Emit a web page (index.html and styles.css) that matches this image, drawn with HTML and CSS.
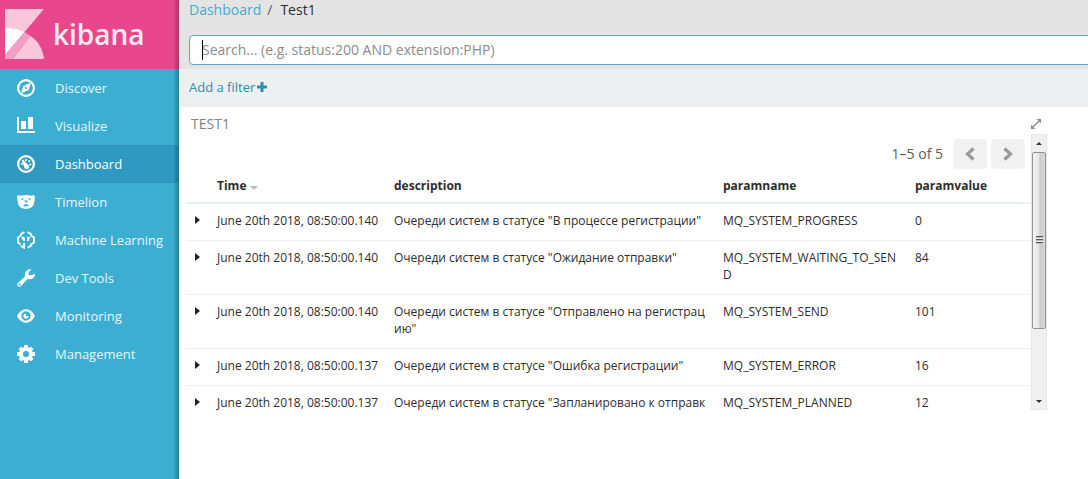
FILE: index.html
```html
<!DOCTYPE html>
<html lang="en">
<head>
<meta charset="utf-8">
<title>Test1 - Kibana</title>
<link rel="stylesheet" href="styles.css">
</head>
<body>
<div class="app">
  <aside class="sidebar">
    <a class="brand" href="#">
      <svg class="brand-mark" width="39" height="50" viewBox="0 0 39 50" aria-hidden="true">
        <path d="M0 0H39L0 46Z" fill="#f9c6dc"/>
        <path d="M0 19Q10 18.500 19.500 23L0 46Z" fill="#fff"/>
        <path d="M19.500 23L25.500 27L8 50H0V46Z" fill="#f49ec5"/>
        <path d="M25.500 27C33 32 38 40 39 50H8Z" fill="#f9c6dc"/>
      </svg>
      <span class="brand-name">kibana</span>
    </a>
    <nav class="nav">
      <a class="nav-item" href="#">
        <svg class="nav-icon" viewBox="0 0 18 18" aria-hidden="true"><circle cx="9" cy="9" r="7.900" fill="none" stroke="#fff" stroke-width="2.200"/><path fill="#fff" fill-rule="evenodd" d="M13.700 3.800L11.800 11 4.300 14.200 6.200 7ZM9 7.900A1.100 1.100 0 1 0 9 10.100 1.100 1.100 0 1 0 9 7.900Z"/></svg>
        Discover
      </a>
      <a class="nav-item" href="#">
        <svg class="nav-icon" viewBox="0 0 18 18" aria-hidden="true"><path fill="#fff" d="M0 0H2V14H18V16H0ZM4 4H9V12H4ZM11 0H16V12H11Z"/></svg>
        Visualize
      </a>
      <a class="nav-item active" href="#" aria-current="page">
        <svg class="nav-icon" viewBox="0 0 18 18" aria-hidden="true"><circle cx="9" cy="9" r="7.900" fill="none" stroke="#fff" stroke-width="2.200"/><g fill="#fff"><circle cx="9" cy="5" r="1.100"/><circle cx="12.300" cy="6.200" r="1.100"/><circle cx="13.300" cy="9.500" r="1.100"/><circle cx="4.800" cy="9" r="1"/><path d="M4.600 5.400L6 4.600L10.500 9.300A2.600 2.600 0 1 1 7 11.600Z"/></g></svg>
        Dashboard
      </a>
      <a class="nav-item" href="#">
        <svg class="nav-icon" viewBox="0 0 18 18" aria-hidden="true"><path fill="#fff" d="M0 3Q2 1.500 4 2.800Q9 1.200 14 2.800Q16 1.500 18 3L17.600 6.500Q17.500 15.800 9 16Q.5 15.800 .4 6.500Z"/><g fill="#3caed2"><circle cx="5.500" cy="6" r=".9"/><circle cx="12.500" cy="6" r=".9"/><path d="M7 7.500H11L9.600 9.500H8.400ZM6 12.500Q9 9.500 12 12.500Q9 14.500 6 12.500Z"/></g></svg>
        Timelion
      </a>
      <a class="nav-item" href="#">
        <svg class="nav-icon" viewBox="0 0 18 18" aria-hidden="true"><g fill="none" stroke="#fff" stroke-width="1.900"><path d="M7.500 1L4 3V4.500L1 6.500V11.500L3.500 13.200"/><path d="M3.500 14.800L7 16.800V12"/><path d="M10.500 1L14 3V4.500L17 6.500V11.500L14 13.500V14.800L10.500 16.800"/><path d="M7 7V10M11 7V10"/></g><g fill="#fff"><circle cx="6" cy="7" r="1.500"/><circle cx="11.500" cy="7" r="1.500"/></g></svg>
        Machine Learning
      </a>
      <a class="nav-item" href="#">
        <svg class="nav-icon" viewBox="0 0 18 18" aria-hidden="true"><path fill="#fff" fill-rule="evenodd" d="M14.500 .4L11.700 3.200V6.300H14.800L17.700 4.500Q18.400 8.600 14.700 10Q12.600 10.500 10.900 9.800L4 17Q2.400 18.500 .9 17.100Q-.5 15.500 1 14L8.100 7.300Q7.300 4.700 8.800 2.400Q11-.5 14.500 .4ZM2.500 14.500A1 1 0 1 0 2.500 16.500 1 1 0 1 0 2.500 14.500Z"/></svg>
        Dev Tools
      </a>
      <a class="nav-item" href="#">
        <svg class="nav-icon" viewBox="0 0 18 18" aria-hidden="true"><path fill="#fff" fill-rule="evenodd" d="M0 9Q3.500 2.200 9 2.200T18 9Q14.500 15.800 9 15.800T0 9ZM9 4.300A4.700 4.700 0 1 0 9 13.700 4.700 4.700 0 1 0 9 4.300Z"/><path fill="#fff" d="M9 6.400V9H11.600A2.600 2.600 0 1 1 9 6.400Z"/></svg>
        Monitoring
      </a>
      <a class="nav-item" href="#">
        <svg class="nav-icon" viewBox="0 0 18 18" aria-hidden="true"><circle cx="9" cy="9" r="5" fill="none" stroke="#fff" stroke-width="3.800"/><g stroke="#fff" stroke-width="3.800"><path d="M9 0V4M9 14V18M0 9H4M14 9H18M2.800 2.800L5.500 5.500M12.500 12.500L15.200 15.200M2.800 15.200L5.500 12.500M12.500 5.500L15.200 2.800"/></g></svg>
        Management
      </a>
    </nav>
  </aside>
  <main class="main">
    <header class="topbar">
      <div class="crumbs"><a class="crumb-link" href="#">Dashboard</a><span class="crumb-sep">/</span><span class="crumb-current">Test1</span></div>
      <div class="search">
        <span class="cursor"></span>
        <input class="search-input" type="text" aria-label="Search" placeholder="Search... (e.g. status:200 AND extension:PHP)">
      </div>
    </header>
    <div class="filterbar">
      <a class="filter-link" href="#">Add a filter<svg class="plus" width="10" height="10" viewBox="0 0 10 10" aria-hidden="true"><path fill="currentColor" d="M3.500 0H6.500V3.500H10V6.500H6.500V10H3.500V6.500H0V3.500H3.500Z"/></svg></a>
    </div>
    <section class="panel">
      <div class="panel-head">
        <h1 class="panel-title">TEST1</h1>
        <button class="expand" type="button" aria-label="Expand">
          <svg width="12" height="12" viewBox="0 0 12 12" aria-hidden="true"><path d="M6.500 1H11V5.500ZM1 6.500V11H5.500Z" fill="#8e9193"/><path d="M9.500 2.500L2.500 9.500" stroke="#8e9193" stroke-width="1.400"/></svg>
        </button>
      </div>
      <div class="panel-body">
        <div class="content">
          <div class="pager">
            <span class="pager-text">1–5 of 5</span>
            <button class="pager-btn" type="button" aria-label="Previous page"><svg width="10" height="14" viewBox="0 0 10 14" aria-hidden="true"><path d="M8.500 1.500L2.500 7L8.500 12.500" fill="none" stroke="#999" stroke-width="3.200"/></svg></button>
            <button class="pager-btn" type="button" aria-label="Next page"><svg width="10" height="14" viewBox="0 0 10 14" aria-hidden="true"><path d="M1.500 1.500L7.500 7L1.500 12.500" fill="none" stroke="#999" stroke-width="3.200"/></svg></button>
          </div>
          <table class="docs">
            <colgroup><col class="col-toggle"><col class="col-time"><col class="col-desc"><col class="col-name"><col></colgroup>
            <thead>
              <tr><th></th><th scope="col">Time <span class="sort"></span></th><th scope="col">description</th><th scope="col">paramname</th><th scope="col">paramvalue</th></tr>
            </thead>
            <tbody>
              <tr><td><button class="toggle" type="button" aria-label="Show details"></button></td><td class="time">June 20th 2018, 08:50:00.140</td><td>Очереди систем в статусе "В процессе регистрации"</td><td>MQ_SYSTEM_PROGRESS</td><td>0</td></tr>
              <tr><td><button class="toggle" type="button" aria-label="Show details"></button></td><td class="time">June 20th 2018, 08:50:00.140</td><td>Очереди систем в статусе "Ожидание отправки"</td><td>MQ_SYSTEM_WAITING_TO_SEND</td><td>84</td></tr>
              <tr><td><button class="toggle" type="button" aria-label="Show details"></button></td><td class="time">June 20th 2018, 08:50:00.140</td><td>Очереди систем в статусе "Отправлено на регистрацию"</td><td>MQ_SYSTEM_SEND</td><td>101</td></tr>
              <tr><td><button class="toggle" type="button" aria-label="Show details"></button></td><td class="time">June 20th 2018, 08:50:00.137</td><td>Очереди систем в статусе "Ошибка регистрации"</td><td>MQ_SYSTEM_ERROR</td><td>16</td></tr>
              <tr><td><button class="toggle" type="button" aria-label="Show details"></button></td><td class="time">June 20th 2018, 08:50:00.137</td><td>Очереди систем в статусе "Запланировано к отправке"</td><td>MQ_SYSTEM_PLANNED</td><td>12</td></tr>
            </tbody>
          </table>
        </div>
        <div class="scrollbar" aria-hidden="true">
          <span class="arrow arrow-up"></span>
          <div class="track"><div class="thumb"><span class="grip"></span></div></div>
          <span class="arrow arrow-down"></span>
        </div>
      </div>
    </section>
  </main>
</div>
</body>
</html>
```
FILE: styles.css
```css
* { box-sizing: border-box; }
body {
  margin: 0;
  font-family: "Open Sans", "Noto Sans", sans-serif;
  font-size: 12px;
  line-height: 17px;
  color: #2d2d2d;
  background: #fff;
}
a { text-decoration: none; }
button { margin: 0; padding: 0; border: 0; background: none; font: inherit; }

.app { display: flex; min-height: 100vh; overflow: hidden; }

/* Sidebar */
.sidebar {
  flex: 0 0 179px;
  background: linear-gradient(to left, rgba(0, 0, 0, .28), rgba(0, 0, 0, 0) 6px), #3caed2;
}
.brand {
  display: flex;
  gap: 9px;
  height: 69px;
  padding: 9px 0 0 5px;
  color: #fdeaf3;
  background: linear-gradient(to left, rgba(0, 0, 0, .28), rgba(0, 0, 0, 0) 6px), #e8488b;
}
.brand-name { font-size: 28px; font-weight: 600; line-height: 51px; }
.nav-item {
  display: flex;
  align-items: center;
  gap: 20px;
  height: 38px;
  padding-left: 17px;
  font-size: 13px;
  color: #e9f6fa;
}
.nav-item.active {
  color: #fff;
  background: linear-gradient(to left, rgba(0, 0, 0, .28), rgba(0, 0, 0, 0) 6px), #2f99c1;
}
.nav-icon { width: 18px; height: 18px; }

/* Header */
.main { flex: 1; min-width: 0; }
.topbar { height: 69px; padding-left: 10px; background: #e4e4e4; }
.crumbs { display: flex; gap: 6px; height: 35px; font-size: 14px; line-height: 20px; }
.crumb-link { color: #3caed2; }
.crumb-sep { color: #5a5a5a; }
.crumb-current { padding-left: 2px; color: #2d2d2d; }
.search {
  display: flex;
  align-items: center;
  height: 30px;
  margin-right: -8px;
  padding-left: 12px;
  border: 1px solid #5fa9c4;
  border-radius: 4px;
  background: #fff;
}
.cursor { width: 1px; height: 20px; margin-right: -1px; background: #000; }
.search-input {
  flex: 1;
  padding: 0;
  border: 0;
  outline: 0;
  background: none;
  font: inherit;
  font-size: 14px;
  line-height: 20px;
}
.search-input::placeholder { color: #8c8c8c; opacity: 1; }
.filterbar {
  display: flex;
  align-items: center;
  height: 38px;
  padding: 0 10px 2px;
  background: #ecf0f1;
}
.filter-link { font-size: 13px; color: #328caa; }
.plus { margin-left: 2px; }

/* Panel */
.panel { margin: 0 41px 0 7px; }
.panel-head {
  display: flex;
  justify-content: space-between;
  align-items: center;
  height: 27px;
  padding: 7px 5px 0;
}
.panel-title { margin: 0; font-size: 14px; font-weight: 400; line-height: 20px; color: #7b8587; }
.expand { display: flex; }
.panel-body { display: flex; height: 276px; overflow: hidden; }
.content { flex: 1; min-width: 0; }
.pager {
  display: flex;
  align-items: center;
  justify-content: flex-end;
  gap: 4px;
  padding: 5px 6px 0 0;
}
.pager-text { padding-right: 6px; font-size: 14px; line-height: 20px; color: #5a5a5a; }
.pager-btn {
  display: flex;
  align-items: center;
  justify-content: center;
  width: 34px;
  height: 30px;
  border-radius: 4px;
  background: #f2f2f2;
}

/* Document table */
.docs { width: 100%; table-layout: fixed; border-collapse: separate; border-spacing: 0; }
.col-toggle { width: 23px; }
.col-time { width: 177px; }
.col-desc { width: 329px; }
.col-name { width: 192px; }
.docs th {
  height: 35px;
  padding: 8px;
  border-bottom: 2px solid #ecf0f1;
  font-weight: 700;
  text-align: left;
  vertical-align: top;
}
.docs td {
  padding: 8px 8px 11px;
  border-bottom: 1px solid #ecf0f1;
  vertical-align: top;
  word-break: break-all;
}
.docs .time { padding-right: 0; white-space: nowrap; }
.sort {
  display: inline-block;
  border: 4px solid transparent;
  border-top-color: #b4bcc2;
  border-bottom: 0;
}
.toggle {
  display: block;
  width: 5px;
  height: 8px;
  margin: 4px 0 0 1px;
  background: #222;
  clip-path: polygon(0 0, 100% 50%, 0 100%);
}

/* Scrollbar */
.scrollbar {
  display: flex;
  flex-direction: column;
  align-items: center;
  width: 16px;
  border: 1px solid #e6e6e6;
  background: #f0f0f0;
}
.arrow { width: 6px; height: 3px; background: #333; }
.arrow-up { margin: 7px 0; clip-path: polygon(50% 0, 100% 100%, 0 100%); }
.arrow-down { margin: 6px 0; clip-path: polygon(0 0, 100% 0, 50% 100%); }
.track { flex: 1; align-self: stretch; }
.thumb {
  display: flex;
  align-items: center;
  justify-content: center;
  height: 73%;
  border: 1px solid #929292;
  border-radius: 2px;
  background: linear-gradient(to right, #f4f4f4, #e6e6e8 45%, #cacacf 60%, #d8d8dc);
}
.grip {
  width: 7px;
  height: 8px;
  background: repeating-linear-gradient(#555 0, #555 1px, #bbb 1px, #bbb 2px, #eee 2px, #eee 3px);
}
```
